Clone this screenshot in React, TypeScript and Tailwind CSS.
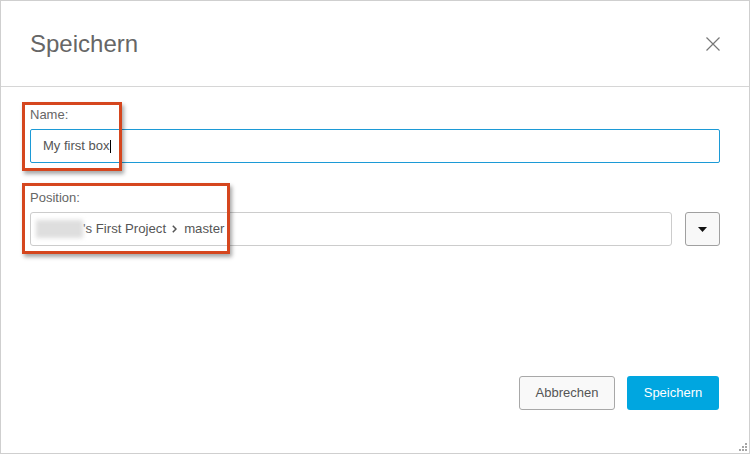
import React from "react";

export default function App() {
  return (
    <div className="relative w-[750px] h-[454px] bg-white border border-[#cfcfcf] flex flex-col font-['Liberation_Sans',Arial,sans-serif] overflow-hidden">
      {/* Header */}
      <div className="h-[86px] shrink-0 border-b border-[#d6d6d6] flex items-center justify-between pl-[29px] pr-[29px]">
        <h1 className="text-[24px] leading-[28px] text-[#666666] font-normal">Speichern</h1>
        <svg width="14" height="14" viewBox="0 0 14 14" className="block">
          <path d="M0.5 0.5 L13.5 13.5 M13.5 0.5 L0.5 13.5" stroke="#777777" strokeWidth="1.2" fill="none" />
        </svg>
      </div>

      {/* Body */}
      <div className="flex flex-col px-[29px] pt-[20px]">
        <label className="text-[13px] leading-[16px] text-[#666666] mb-[6px]">Name:</label>
        <div className="h-[34px] border border-[#1c9ad6] rounded-[2px] flex items-center pl-[12px]">
          <span className="text-[13px] text-[#555555] leading-[16px]">My first box</span>
          <span className="inline-block w-px h-[13px] bg-black ml-px" />
        </div>

        <label className="text-[13px] leading-[16px] text-[#666666] mt-[27px] mb-[6px]">Position:</label>
        <div className="flex gap-[13px]">
          <div className="flex-1 h-[34px] border border-[#cccccc] rounded-[3px] flex items-center pl-[5px]">
            <span className="inline-block w-[47px] h-[18px] bg-[#dedede] blur-[2px]" />
            <span className="text-[13.2px] leading-[16px] text-[#555555]">'s First Project</span>
            <svg width="5" height="8" viewBox="0 0 5 8" className="ml-[6px] mr-[7px] block">
              <path d="M0.8 0.7 L4 4 L0.8 7.3" stroke="#555555" strokeWidth="1.5" fill="none" />
            </svg>
            <span className="text-[13.2px] leading-[16px] text-[#555555]">master</span>
          </div>
          <button className="w-[35px] h-[34px] border border-[#a0a0a0] rounded-[3px] bg-[#f8f8f8] flex items-center justify-center">
            <svg width="9" height="5" viewBox="0 0 9 5" className="block">
              <path d="M0 0 L9 0 L4.5 5 Z" fill="#111111" />
            </svg>
          </button>
        </div>
      </div>

      {/* Footer */}
      <div className="mt-auto flex justify-end gap-[12px] pr-[30px] pb-[43px]">
        <button className="h-[34px] w-[96px] border border-[#a8a8a8] rounded-[3px] bg-[#f9f9f9] text-[13px] text-[#555555]">
          Abbrechen
        </button>
        <button className="h-[34px] w-[92px] rounded-[3px] bg-[#00a6e0] text-[13px] text-white">
          Speichern
        </button>
      </div>

      {/* Annotation boxes */}
      <div className="absolute left-[21px] top-[101px] w-[100px] h-[69px] border-[3px] border-[#d5461e] shadow-[2px_3px_4px_rgba(0,0,0,0.35)] pointer-events-none" />
      <div className="absolute left-[21px] top-[182px] w-[208px] h-[71px] border-[3px] border-[#d5461e] shadow-[2px_3px_4px_rgba(0,0,0,0.35)] pointer-events-none" />

      {/* Resize grip */}
      <svg width="9" height="9" viewBox="0 0 9 9" className="absolute right-[1px] bottom-[1px] block">
        <rect x="6" y="0" width="2" height="2" fill="#a5a5a5" />
        <rect x="3" y="3" width="2" height="2" fill="#a5a5a5" />
        <rect x="6" y="3" width="2" height="2" fill="#a5a5a5" />
        <rect x="0" y="6" width="2" height="2" fill="#a5a5a5" />
        <rect x="3" y="6" width="2" height="2" fill="#a5a5a5" />
        <rect x="6" y="6" width="2" height="2" fill="#a5a5a5" />
      </svg>
    </div>
  );
}
